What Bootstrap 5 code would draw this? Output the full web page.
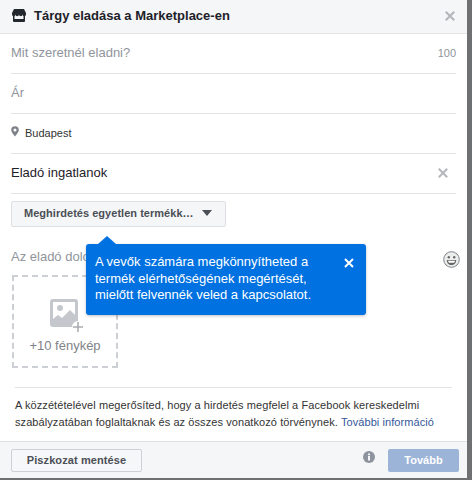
<!DOCTYPE html>
<html lang="hu">
  <head>
    <meta charset="UTF-8" />
    <title>Tárgy eladása a Marketplace-en</title>
    <link href="https://cdn.jsdelivr.net/npm/bootstrap@5.3.0/dist/css/bootstrap.min.css" rel="stylesheet" />
    <style>
      html, body { height: 480px; overflow: hidden; }
      body { background: #6f7071; font-family: "Liberation Sans", Arial, sans-serif; color: #1d2129; }
      .dialog-box { position: relative; width: 467px; height: 478px; background: #fff; }
      .dialog-head { height: 34px; background: #f5f6f7; border-bottom: 1px solid #e5e5e5; padding: 0 12px 2px; font-size: 13px; font-weight: 700; }
      .head-x, .row-x { width: 10px; height: 10px; }
      .field-row { height: 40px; margin: 0 11px; padding-bottom: 2px; border-bottom: 1px solid #e2e3e5; font-size: 13px; }
      .hint { color: #90949c; }
      .count { color: #90949c; font-size: 11px; font-weight: 400; margin-top: 2px; }
      .place { font-size: 11px; color: #333; margin-top: 2px; }
      .sell-btn { width: 215px; height: 26px; margin: 7px 0 0 11px; padding: 0 13px 2px 12px; background: #f5f6f7; border: 1px solid #dddfe2; border-radius: 2px; font-size: 11px; font-weight: 700; color: #4b4f56; white-space: nowrap; letter-spacing: .03px; }
      .caret-down { width: 0; height: 0; border-left: 5px solid transparent; border-right: 5px solid transparent; border-top: 6px solid #4b4f56; }
      .desc-row { height: 48px; margin: 0 11px; padding-top: 20px; font-size: 13px; }
      .photo-box { width: 106px; height: 93px; margin-left: 12px; border: 2px dashed #ccd0d5; color: #7f8389; font-size: 13px; }
      .legal-text { margin: 19px 15px 0 15px; padding-top: 9px; border-top: 1px solid #e2e3e5; font-size: 11px; line-height: 17px; color: #333; height: 55px; letter-spacing: 0.08px; }
      .legal-text a { color: #365899; text-decoration: none; }
      .dialog-foot { position: absolute; left: 0; right: 0; bottom: 0; height: 37px; background: #f5f6f7; border-top: 1px solid #dddfe2; padding: 7px 8px 7px 11px; }
      .draft-btn { width: 131px; height: 23px; padding: 0; background: #f6f7f9; border: 1px solid #ced0d4; border-radius: 2px; font-size: 11px; font-weight: 700; color: #4b4f56; letter-spacing: .1px; }
      .next-btn { width: 71px; height: 23px; padding: 0; background: #9cb4d8; border: 0; border-radius: 2px; font-size: 11px; font-weight: 700; color: #fff; }
      .hint-pop { position: absolute; left: 86px; top: 244px; width: 280px; height: 71px; padding: 10px 8px 0 9px; background: #0071e0; border-radius: 3px; color: #fff; font-size: 13px; line-height: 16.5px; box-shadow: 0 1px 3px rgba(0, 0, 0, 0.25); }
      .hint-pop::before { content: ""; position: absolute; left: 12px; top: -8px; border-left: 9px solid transparent; border-right: 9px solid transparent; border-bottom: 8px solid #0071e0; }
      .pop-text { width: 240px; }
      .pop-x { position: absolute; right: 12px; top: 14px; width: 10px; height: 10px; }
      .smile-icon { position: absolute; left: 443px; top: 251px; width: 17px; height: 17px; }
      .info-icon { position: absolute; left: 363px; top: 451px; width: 12px; height: 12px; }
      .pin-icon { margin-top: -2px; margin-right: 2px; }
      .shop-icon { margin-top: -1px; }
      .photo-label { margin-top: 3px; }
    </style>
  </head>
  <body>
    <div class="dialog-box">
      <div class="dialog-head d-flex align-items-center justify-content-between">
        <div class="d-flex align-items-center gap-2">
          <svg class="shop-icon" width="14" height="13" viewBox="0 0 14 13"><rect x="1" y="6" width="12" height="7" rx="1" fill="#23272e"/><rect x="2.500" y="6" width="9" height="4" fill="#f5f6f7"/><path fill="#23272e" d="M2 0h10l2 4v1.500a1.750 1.750 0 0 1-3.500 0 1.750 1.750 0 0 1-3.500 0 1.750 1.750 0 0 1-3.500 0 1.750 1.750 0 0 1-3.500 0V4z"/></svg>
          <span>Tárgy eladása a Marketplace-en</span>
        </div>
        <svg class="head-x" viewBox="0 0 10 10"><path stroke="#b4b7bc" stroke-width="2.200" d="M.8.8l8.400 8.400M9.200.8L.8 9.200"/></svg>
      </div>
      <div class="field-row d-flex align-items-center justify-content-between">
        <span class="hint">Mit szeretnél eladni?</span>
        <span class="count">100</span>
      </div>
      <div class="field-row d-flex align-items-center"><span class="hint">Ár</span></div>
      <div class="field-row d-flex align-items-center gap-1">
        <svg class="pin-icon" width="8" height="11" viewBox="0 0 9 12"><path fill="#7f8389" fill-rule="evenodd" d="M4.500 0a4.300 4.300 0 0 1 4.300 4.300C8.800 7 4.500 11.500 4.500 11.500S.2 7 .2 4.300A4.300 4.300 0 0 1 4.500 0zm0 2.600a1.700 1.700 0 1 0 0 3.400 1.700 1.700 0 0 0 0-3.400z"/></svg>
        <span class="place">Budapest</span>
      </div>
      <div class="field-row d-flex align-items-center justify-content-between">
        <span>Eladó ingatlanok</span>
        <svg class="row-x me-2" viewBox="0 0 10 10"><path stroke="#b4b7bc" stroke-width="2" d="M.8.8l8.400 8.400M9.200.8L.8 9.200"/></svg>
      </div>
      <div class="sell-btn d-flex align-items-center justify-content-between">
        <span>Meghirdetés egyetlen termékk…</span>
        <span class="caret-down"></span>
      </div>
      <div class="desc-row"><span class="hint">Az eladó dolog leírása</span></div>
      <div class="photo-box d-flex flex-column align-items-center">
        <svg class="mt-3" width="36" height="40" viewBox="0 0 36 40"><rect x="3" y="6" width="28" height="28" rx="3" fill="#c4c7cc"/><rect x="6" y="9" width="22" height="17" fill="#fff"/><circle cx="13" cy="15" r="3" fill="#c4c7cc"/><path fill="#c4c7cc" d="M6 26l5-4 4 3 8-8 5 5v8H6z"/><circle cx="31" cy="34" r="6" fill="#fff"/><path stroke="#a8abb0" stroke-width="1.500" d="M31 29v10M26 34h10"/></svg>
        <span class="photo-label">+10 fénykép</span>
      </div>
      <div class="legal-text">
        A közzétételével megerősíted, hogy a hirdetés megfelel a Facebook kereskedelmi szabályzatában foglaltaknak és az összes vonatkozó törvénynek. <a href="#">További információ</a>
      </div>
      <div class="dialog-foot d-flex justify-content-between">
        <button class="draft-btn">Piszkozat mentése</button>
        <button class="next-btn">Tovább</button>
      </div>
      <svg class="smile-icon" viewBox="0 0 17 17"><circle cx="8.500" cy="8.500" r="7.800" fill="#eceded" stroke="#7f8389"/><circle cx="5.800" cy="6.300" r="1.200" fill="#666"/><circle cx="11.200" cy="6.300" r="1.200" fill="#666"/><path fill="#666" d="M3.800 9h9.400c0 3-2 5-4.700 5s-4.700-2-4.700-5z"/><path fill="#fff" d="M5 9.700h7c-.2.900-.5 1.500-1 2H6c-.5-.5-.8-1.100-1-2z"/></svg>
      <svg class="info-icon" viewBox="0 0 12 12"><circle cx="6" cy="6" r="6" fill="#8d949e"/><rect x="5" y="5" width="2" height="4.500" fill="#f5f6f7"/><rect x="5" y="2.500" width="2" height="1.700" fill="#f5f6f7"/></svg>
      <div class="hint-pop">
        <div class="pop-text">A vevők számára megkönnyítheted a termék elérhetőségének megértését, mielőtt felvennék veled a kapcsolatot.</div>
        <svg class="pop-x" viewBox="0 0 10 10"><path stroke="#fff" stroke-width="2" d="M1 1l8 8M9 1L1 9"/></svg>
      </div>
    </div>
    <script src="https://cdn.jsdelivr.net/npm/bootstrap@5.3.0/dist/js/bootstrap.bundle.min.js"></script>
  </body>
</html>
